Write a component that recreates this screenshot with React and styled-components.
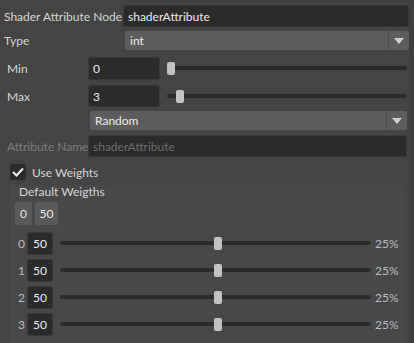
import React from 'react';
import styled, { createGlobalStyle } from 'styled-components';

const GlobalStyle = createGlobalStyle`
  html, body {
    margin: 0;
    padding: 0;
    background: #444444;
  }
  * {
    box-sizing: border-box;
  }
`;

const Window = styled.div`
  width: 414px;
  height: 343px;
  display: flex;
  background: #444444;
  overflow: hidden;
  font-family: Lato, "Liberation Sans", sans-serif;
  font-size: 12px;
  color: #d6d6d6;
`;

const Content = styled.div`
  flex: 1;
  display: flex;
  flex-direction: column;
  padding: 5px 0 0 4px;
`;

const ScrollStrip = styled.div`
  width: 5px;
  background: #3f3f3f;
`;

const Row = styled.div`
  display: flex;
  align-items: center;
  height: ${p => p.$h || 22}px;
  margin-top: ${p => p.$mt || 0}px;
  padding-left: ${p => p.$indent || 0}px;
  padding-right: ${p => p.$pr || 0}px;
`;

const Label = styled.div`
  width: ${p => p.$w}px;
  flex-shrink: 0;
  color: ${p => (p.$disabled ? '#7d7d7d' : '#d6d6d6')};
  white-space: nowrap;
`;

const TextField = styled.div`
  flex: ${p => (p.$w ? '0 0 auto' : '1')};
  width: ${p => (p.$w ? `${p.$w}px` : 'auto')};
  height: 100%;
  display: flex;
  align-items: center;
  padding-left: 4px;
  background: #2b2b2b;
  border: 1px solid #393939;
  border-radius: 2px;
  color: ${p => (p.$placeholder ? '#6e6e6e' : '#ececec')};
`;

const Combo = styled.div`
  flex: 1;
  height: 100%;
  display: flex;
  background: #5d5d5d;
  border-radius: 2px;
  overflow: hidden;
`;

const ComboText = styled.div`
  flex: 1;
  display: flex;
  align-items: center;
  padding-left: 5px;
  color: #ececec;
  border-right: 1px solid #4f4f4f;
`;

const ComboArrow = styled.div`
  width: 20px;
  display: flex;
  align-items: center;
  justify-content: center;
`;

const SliderWrap = styled.div`
  flex: 1;
  position: relative;
  height: 13px;
  margin-left: ${p => p.$ml || 7}px;
  margin-right: ${p => p.$mr || 0}px;
`;

const Track = styled.div`
  position: absolute;
  left: 0;
  right: 0;
  top: 4px;
  height: 4px;
  border-radius: 2px;
  background: #2b2b2b;
`;

const Handle = styled.div`
  position: absolute;
  top: 0;
  width: 8px;
  height: 13px;
  border-radius: 2px;
  background: #c2c2c2;
`;

const CheckBox = styled.div`
  width: 16px;
  height: 16px;
  background: #2b2b2b;
  border-radius: 2px;
  display: flex;
  align-items: center;
  justify-content: center;
  margin-right: 6px;
`;

const Group = styled.div`
  margin: 5px 0 0 6px;
  width: 394px;
  flex: 1;
  background: #484848;
  display: flex;
  flex-direction: column;
  padding: 0 0 0 5px;
`;

const GroupTitle = styled.div`
  height: 14px;
  line-height: 13px;
  padding-left: 4px;
  color: #d6d6d6;
`;

const ButtonRow = styled.div`
  display: flex;
  gap: 3px;
  height: 23px;
  margin-top: 3px;
`;

const SmallButton = styled.div`
  width: ${p => p.$w}px;
  height: 100%;
  background: #5a5a5a;
  border-radius: 2px;
  display: flex;
  align-items: center;
  justify-content: center;
  color: #e8e8e8;
`;

const WeightList = styled.div`
  display: flex;
  flex-direction: column;
  gap: 4px;
  margin-top: 7px;
`;

const WeightIndex = styled.div`
  width: 12px;
  padding-left: 3px;
  color: #b9bec4;
`;

const WeightValue = styled.div`
  width: 26px;
  height: 100%;
  display: flex;
  align-items: center;
  justify-content: center;
  background: #2b2b2b;
  border: 1px solid #393939;
  border-radius: 2px;
  color: #ececec;
`;

const Percent = styled.div`
  width: 33px;
  padding-left: 4px;
  color: #b9bec4;
`;

const Arrow = () => (
  <svg width="10" height="6" viewBox="0 0 10 6">
    <path d="M0 0 H10 L5 6 Z" fill="#cfcfcf" />
  </svg>
);

const Slider = ({ pos, ...rest }) => (
  <SliderWrap {...rest}>
    <Track />
    <Handle style={{ left: pos }} />
  </SliderWrap>
);

const weights = [0, 1, 2, 3];

export default function App() {
  return (
    <>
      <GlobalStyle />
      <Window>
        <Content>
          <Row $h={22}>
            <Label $w={119}>Shader Attribute Node</Label>
            <TextField>shaderAttribute</TextField>
          </Row>
          <Row $h={19} $mt={4}>
            <Label $w={121}>Type</Label>
            <Combo>
              <ComboText>int</ComboText>
              <ComboArrow><Arrow /></ComboArrow>
            </Combo>
          </Row>
          <Row $h={23} $mt={7} $indent={3} $pr={2}>
            <Label $w={81}>Min</Label>
            <TextField $w={72}>0</TextField>
            <Slider pos={0} />
          </Row>
          <Row $h={22} $mt={5} $indent={3} $pr={2}>
            <Label $w={81}>Max</Label>
            <TextField $w={72}>3</TextField>
            <Slider pos={9} />
          </Row>
          <Row $h={19} $mt={4} $indent={86} $pr={2}>
            <Combo>
              <ComboText>Random</ComboText>
              <ComboArrow><Arrow /></ComboArrow>
            </Combo>
          </Row>
          <Row $h={22} $mt={5} $indent={3} $pr={2}>
            <Label $w={81} $disabled>Attribute Name</Label>
            <TextField $placeholder>shaderAttribute</TextField>
          </Row>
          <Row $h={16} $mt={7} $indent={6}>
            <CheckBox>
              <svg width="12" height="10" viewBox="0 0 12 10">
                <path d="M1 5 L4.5 8.5 L11 1.5" stroke="#f0f0f0" strokeWidth="2" fill="none" />
              </svg>
            </CheckBox>
            <span>Use Weights</span>
          </Row>
          <Group>
            <GroupTitle>Default Weigths</GroupTitle>
            <ButtonRow>
              <SmallButton $w={17}>0</SmallButton>
              <SmallButton $w={23}>50</SmallButton>
            </ButtonRow>
            <WeightList>
              {weights.map(i => (
                <Row key={i} $h={23}>
                  <WeightIndex>{i}</WeightIndex>
                  <WeightValue>50</WeightValue>
                  <Slider pos={154} $ml={7} />
                  <Percent>25%</Percent>
                </Row>
              ))}
            </WeightList>
          </Group>
        </Content>
        <ScrollStrip />
      </Window>
    </>
  );
}
